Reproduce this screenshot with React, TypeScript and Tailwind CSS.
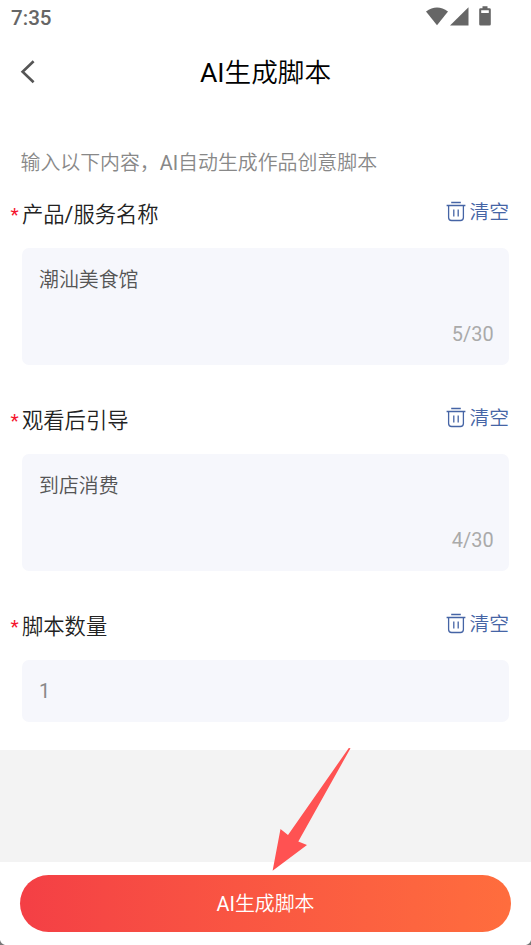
import React from 'react';

function TrashIcon() {
  return (
    <svg className="h-[21px] w-[20px] shrink-0" viewBox="0 0 20 21" fill="none" stroke="#4564a5" strokeWidth="1.3">
      <path d="M0.6 4.5H19.4M5.2 1.5H14.8M2.6 4.5V16.5Q2.6 19.5 5.6 19.5H14.4Q17.4 19.5 17.4 16.5V4.5M7.8 8.4V15.6M12.2 8.4V15.6" />
    </svg>
  );
}

interface FieldProps {
  label: string;
  value: string;
  counter?: string;
}

function Field({ label, value, counter }: FieldProps) {
  return (
    <section className={counter ? 'h-[206px]' : 'h-[167px]'}>
      <div className="flex h-[53px] items-start justify-between pr-[22px] pl-[10px]">
        <div className="flex items-start pt-[4px] text-[21.3px] leading-[32px] text-[#222222]">
          <span className="w-[12px] pl-[0.5px] text-[19px] text-[#f5142d]">*</span>
          <span>{label}</span>
        </div>
        <button className="flex items-start gap-[3.4px] text-[19.8px] leading-[32px] text-[#4564a5]">
          <span className="pt-[6px]">
            <TrashIcon />
          </span>
          <span className="pt-[2px]">清空</span>
        </button>
      </div>
      <div
        className={`mr-[22px] ml-[22px] flex flex-col justify-between rounded-[7px] bg-[#f6f7fc] px-[17px] text-[19.9px] leading-[30px] ${
          counter ? 'h-[117px] pt-[18px] pb-[15px] text-[#555555]' : 'h-[62px] pt-[17px] text-[#888888]'
        }`}
      >
        <div>{value}</div>
        {counter && <div className="-mr-[1.6px] text-right text-[#aaaaaa]">{counter}</div>}
      </div>
    </section>
  );
}

export default function App() {
  return (
    <div className="relative flex h-[945px] w-[531px] flex-col overflow-hidden bg-white font-[Roboto,'Noto_Sans_CJK_SC_DemiLight','Noto_Sans_CJK_SC_Light','Noto_Sans_CJK_SC',sans-serif]">
      <header className="flex h-[36px] shrink-0 items-start justify-between pr-[39px] pl-[11px] text-[#666666]">
        <span className="pt-[5px] text-[20.6px] leading-[26px] font-medium">7:35</span>
        <svg className="mt-[5px] h-[22px] w-[67px]" viewBox="425 5 67 22" fill="#666666">
          <path d="M426 11.4Q437 3.4 448 11.4L437 25.3Z" />
          <path d="M450 25.6L468.5 7.3V25.6Z" />
          <path
            fillRule="evenodd"
            d="M482.5 6.3H487.5V8.2H489.5Q490.8 8.2 490.8 9.5V24.3Q490.8 25.6 489.5 25.6H480.5Q479.2 25.6 479.2 24.3V9.5Q479.2 8.2 480.5 8.2H482.5ZM481.2 10.3V13H488.8V10.3Z"
          />
        </svg>
      </header>

      <nav className="grid h-[72px] shrink-0 grid-cols-[60px_1fr_60px] items-center">
        <svg className="ml-[20px] h-[26px] w-[18px]" viewBox="0 0 18 26" fill="none" stroke="#555555" strokeWidth="2.6">
          <path d="M13.6 2.2L2.6 12.7L13.6 23.2" />
        </svg>
        <h1 className="pt-[2px] text-center text-[26.6px] leading-[40px] text-black">AI生成脚本</h1>
      </nav>

      <main className="h-[642px] shrink-0">
        <p className="h-[87px] pt-[41px] pl-[20.5px] text-[19.9px] leading-[30px] text-[#888888]">
          输入以下内容，AI自动生成作品创意脚本
        </p>
        <Field label="产品/服务名称" value="潮汕美食馆" counter="5/30" />
        <Field label="观看后引导" value="到店消费" counter="4/30" />
        <Field label="脚本数量" value="1" />
      </main>

      <div className="h-[112px] shrink-0 bg-[#f3f3f3]" />
      <footer className="h-[83px] shrink-0 px-[20px] pt-[13px]">
        <button className="h-[57px] w-full rounded-full bg-linear-to-r from-[#f43f45] to-[#ff6d3d] pt-[2px] text-[19.9px] text-white">
          AI生成脚本
        </button>
      </footer>

      <svg className="absolute top-[745px] left-[270px] h-[128px] w-[84px]" viewBox="270 745 84 128" fill="#ff5252">
        <path d="M348.8 748L350.5 748.2L298.3 841.5L307 845L272.6 870.8L280.5 829L288 835Z" />
      </svg>
      <svg className="absolute bottom-0 left-0 h-[5px] w-[531px]" viewBox="0 0 531 5" fill="#777777">
        <path d="M0 0Q1 4 5 5H0ZM531 0Q530 4 526 5H531Z" />
      </svg>
    </div>
  );
}
